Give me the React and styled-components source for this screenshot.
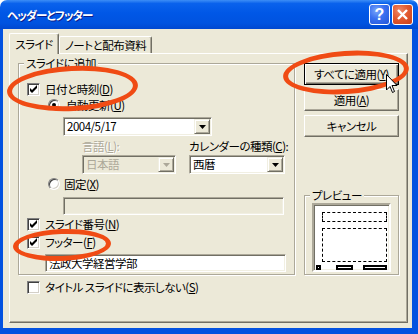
import React from 'react';
import styled, { createGlobalStyle } from 'styled-components';

const GlobalStyle = createGlobalStyle`
  html, body {
    margin: 0;
    padding: 0;
    background: #fff;
  }
`;

const Window = styled.div`
  position: relative;
  width: 418px;
  height: 334px;
  display: flex;
  flex-direction: column;
  overflow: hidden;
  font-family: "Noto Sans CJK JP", "Noto Sans", sans-serif;
  font-size: 11.5px;
  letter-spacing: -0.5px;
  font-feature-settings: "palt";
  color: #000;
`;

const TitleBar = styled.div`
  flex: none;
  height: 29px;
  display: flex;
  align-items: center;
  padding: 0 5px 0 7px;
  border-radius: 7px 7px 0 0;
  background: linear-gradient(
    to bottom,
    #3d8ef6 0%,
    #0a62ec 12%,
    #0057e6 45%,
    #0053e0 80%,
    #0048d0 100%
  );
`;

const Title = styled.div`
  flex: 1;
  color: #fff;
  font-weight: bold;
  font-size: 11.5px;
  letter-spacing: -1px;
  text-shadow: 1px 1px 0 #0a1f8a;
`;

const CaptionButtons = styled.div`
  display: flex;
  gap: 2px;
`;

const CaptionButton = styled.div`
  width: 21px;
  height: 21px;
  box-sizing: border-box;
  border: 1px solid #fff;
  border-radius: 3px;
  display: flex;
  align-items: center;
  justify-content: center;
  color: #fff;
  font-family: "Liberation Sans", Arial, sans-serif;
  font-weight: bold;
  font-size: 16px;
  letter-spacing: 0;
  background: ${(p) =>
    p.$close
      ? 'radial-gradient(circle at 35% 30%, #f08a6a 0%, #e35a30 45%, #c8401c 100%)'
      : 'radial-gradient(circle at 35% 30%, #7aa6fa 0%, #3a70f0 45%, #2456d8 100%)'};
`;

const Frame = styled.div`
  flex: 1;
  display: flex;
  flex-direction: column;
  background: #ece9d8;
  border-style: solid;
  border-color: #0352e0;
  border-width: 0 6px 6px 3px;
  padding: 4px 4px 5px 6px;
`;

const TabStrip = styled.div`
  flex: none;
  height: 20px;
  display: flex;
  align-items: flex-end;
`;

const Tab = styled.div`
  position: relative;
  z-index: ${(p) => (p.$active ? 2 : 1)};
  box-sizing: border-box;
  width: ${(p) => p.$width}px;
  height: ${(p) => (p.$active ? 21 : 17)}px;
  margin-bottom: ${(p) => (p.$active ? -1 : 0)}px;
  display: flex;
  align-items: center;
  justify-content: center;
  background: #ece9d8;
  border: 1px solid;
  border-color: #fff #716f64 transparent #fff;
  border-bottom: none;
  border-radius: 2px 2px 0 0;
  box-shadow: inset -1px 0 0 #aca899;
  line-height: 14px;
`;

const Panel = styled.div`
  flex: 1;
  display: flex;
  flex-direction: column;
  border: 1px solid;
  border-color: #fff #716f64 #716f64 #fff;
  box-shadow: inset -1px -1px 0 #aca899;
  padding: 2px 8px 0 8px;
`;

const TopRow = styled.div`
  display: flex;
  gap: 9px;
`;

const Group = styled.fieldset`
  margin: 0;
  padding: 0;
  min-width: 0;
  width: ${(p) => p.$width}px;
  box-sizing: border-box;
  border: 1px solid #aca899;
  box-shadow: inset 1px 1px 0 #fff, 1px 1px 0 #fff;
  ${(p) => p.$grow && 'margin-top: auto;'}
`;

const Legend = styled.legend`
  margin-left: ${(p) => p.$offset}px;
  padding: 0 2px;
  line-height: 14px;
  background: #ece9d8;
`;

const GroupBody = styled.div`
  display: flex;
  flex-direction: column;
  padding: 0 0 2px 8px;
`;

const Row = styled.div`
  display: flex;
  align-items: center;
  height: 16px;
  margin-top: ${(p) => p.$top || 0}px;
  margin-left: ${(p) => p.$indent || 0}px;
`;

const Label = styled.span`
  margin-left: ${(p) => p.$gap || 0}px;
  line-height: 14px;
  white-space: nowrap;
  color: ${(p) => (p.$disabled ? '#aca899' : '#000')};
  text-shadow: ${(p) => (p.$disabled ? '1px 1px 0 #fff' : 'none')};
  u {
    text-decoration: underline;
    text-underline-offset: 1px;
  }
`;

const CheckBox = styled.div`
  flex: none;
  width: 13px;
  height: 13px;
  box-sizing: border-box;
  border: 1px solid;
  border-color: #808080 #fff #fff #808080;
  box-shadow: inset 1px 1px 0 #404040, inset -1px -1px 0 #d4d0c8;
  background: #fff;
  display: flex;
  align-items: center;
  justify-content: center;
`;

const RadioDot = styled.div`
  flex: none;
  width: 12px;
  height: 12px;
  box-sizing: border-box;
  border-radius: 50%;
  border: 1px solid;
  border-color: #808080 #fff #fff #808080;
  box-shadow: inset 1px 1px 0 #404040, inset -1px -1px 0 #d4d0c8;
  background: #fff;
  display: flex;
  align-items: center;
  justify-content: center;
  &::after {
    content: '';
    width: 4px;
    height: 4px;
    border-radius: 50%;
    background: ${(p) => (p.$checked ? '#000' : 'transparent')};
  }
`;

const Sunken = styled.div`
  box-sizing: border-box;
  display: flex;
  align-items: center;
  width: ${(p) => p.$width}px;
  height: ${(p) => p.$height || 19}px;
  margin-top: ${(p) => p.$top || 0}px;
  margin-left: ${(p) => p.$indent || 0}px;
  border: 1px solid;
  border-color: #aca899 #fff #fff #aca899;
  box-shadow: inset 1px 1px 0 #716f64, inset -1px -1px 0 #f1efe2;
  background: ${(p) => (p.$disabled ? '#ece9d8' : '#fff')};
  padding: 1px;
`;

const FieldText = styled.span`
  flex: 1;
  padding-left: 2px;
  line-height: 15px;
  white-space: nowrap;
  color: ${(p) => (p.$disabled ? '#aca899' : '#000')};
`;

const DropButton = styled.div`
  flex: none;
  width: 16px;
  height: 100%;
  box-sizing: border-box;
  border: 1px solid;
  border-color: #f1efe2 #716f64 #716f64 #f1efe2;
  box-shadow: inset 1px 1px 0 #fff, inset -1px -1px 0 #aca899;
  background: #ece9d8;
  display: flex;
  align-items: center;
  justify-content: center;
`;

const Columns = styled.div`
  display: flex;
  gap: 13px;
  margin-top: 3px;
  margin-left: 55px;
`;

const Column = styled.div`
  display: flex;
  flex-direction: column;
`;

const SideColumn = styled.div`
  flex: 1;
  display: flex;
  flex-direction: column;
  padding-top: 7px;
`;

const Button = styled.div`
  box-sizing: border-box;
  height: 22px;
  margin-bottom: 4px;
  display: flex;
  align-items: center;
  justify-content: center;
  background: #ece9d8;
  border: 1px solid;
  border-color: ${(p) => (p.$default ? '#000' : '#fff #716f64 #716f64 #fff')};
  box-shadow: ${(p) =>
    p.$default
      ? 'inset 1px 1px 0 #fff, inset -1px -1px 0 #716f64, inset -2px -2px 0 #aca899'
      : 'inset -1px -1px 0 #aca899'};
  line-height: 14px;
  white-space: nowrap;
`;

const PreviewBody = styled.div`
  padding: 1px 0 2px 7px;
`;

const PreviewScreen = styled.div`
  box-sizing: border-box;
  width: 79px;
  height: 69px;
  border: 2px solid;
  border-color: #aca899 #fff #fff #aca899;
  box-shadow: inset 1px 1px 0 #716f64, inset -1px -1px 0 #f1efe2;
  background: #fff;
  padding: 7px 2px 0 2px;
  display: flex;
  flex-direction: column;
`;

const DashedBox = styled.div`
  box-sizing: border-box;
  height: ${(p) => p.$height}px;
  margin: ${(p) => p.$top}px 0 0 6px;
  border: 1px dashed #000;
`;

const PreviewFooter = styled.div`
  display: flex;
  align-items: center;
  margin-top: 3px;
`;

const FooterMark = styled.div`
  box-sizing: border-box;
  width: ${(p) => p.$width}px;
  height: 5px;
  margin-left: ${(p) => p.$gap || 0}px;
  border: 2px solid #000;
  background: #fff;
`;

const Ellipse = styled.div`
  position: absolute;
  z-index: 5;
  left: ${(p) => p.$x}px;
  top: ${(p) => p.$y}px;
  width: ${(p) => p.$w}px;
  height: ${(p) => p.$h}px;
  box-sizing: border-box;
  border: 5px solid #f04b14;
  border-radius: 50%;
  transform: rotate(${(p) => p.$rot}deg);
  pointer-events: none;
`;

const Cursor = styled.svg`
  position: absolute;
  z-index: 6;
  left: 386px;
  top: 74px;
`;

const Check = () => (
  <CheckBox>
    <svg width="7" height="8" viewBox="0 -1 7 8">
      <polygon points="0,2 2,4 7,-1 7,2 2,7 0,5" fill="#000" />
    </svg>
  </CheckBox>
);

const Arrow = ({ disabled }) => (
  <svg width="7" height="4" viewBox="0 0 7 4">
    <polygon points="0,0 7,0 3.5,4" fill={disabled ? '#aca899' : '#000'} />
  </svg>
);

const Combo = ({ value, disabled, ...rest }) => (
  <Sunken $disabled={disabled} {...rest}>
    <FieldText $disabled={disabled}>{value}</FieldText>
    <DropButton>
      <Arrow disabled={disabled} />
    </DropButton>
  </Sunken>
);

export default function App() {
  return (
    <Window>
      <GlobalStyle />
      <TitleBar>
        <Title>ヘッダーとフッター</Title>
        <CaptionButtons>
          <CaptionButton>?</CaptionButton>
          <CaptionButton $close>
            <svg width="11" height="11" viewBox="0 0 11 11">
              <path d="M1 1L10 10M10 1L1 10" stroke="#fff" strokeWidth="2.4" />
            </svg>
          </CaptionButton>
        </CaptionButtons>
      </TitleBar>

      <Frame>
        <TabStrip>
          <Tab $active $width={50}>スライド</Tab>
          <Tab $width={93}>ノートと配布資料</Tab>
        </TabStrip>

        <Panel>
          <TopRow>
            <Group $width={277}>
              <Legend $offset={5}>スライドに追加</Legend>
              <GroupBody>
                <Row $top={11}>
                  <Check />
                  <Label $gap={5}>日付と時刻(<u>D</u>)</Label>
                </Row>
                <Row $indent={21}>
                  <RadioDot $checked />
                  <Label $gap={6}>自動更新(<u>U</u>)</Label>
                </Row>
                <Combo value="2004/5/17" $width={149} $top={4} $indent={36} />
                <Columns>
                  <Column>
                    <Label $disabled>言語(<u>L</u>):</Label>
                    <Combo value="日本語" disabled $width={94} $top={2} />
                  </Column>
                  <Column>
                    <Label>カレンダーの種類(<u>C</u>):</Label>
                    <Combo value="西暦" $width={96} $top={2} />
                  </Column>
                </Columns>
                <Row $top={2} $indent={21}>
                  <RadioDot />
                  <Label $gap={4}>固定(<u>X</u>)</Label>
                </Row>
                <Sunken $disabled $width={221} $height={18} $top={5} $indent={36} />
                <Row $top={1}>
                  <Check />
                  <Label $gap={5}>スライド番号(<u>N</u>)</Label>
                </Row>
                <Row $top={2}>
                  <Check />
                  <Label $gap={5}>フッター(<u>F</u>)</Label>
                </Row>
                <Sunken $width={241} $height={18} $top={4} $indent={18}>
                  <FieldText>法政大学経営学部</FieldText>
                </Sunken>
              </GroupBody>
            </Group>

            <SideColumn>
              <Button $default>すべてに適用(<u>Y</u>)</Button>
              <Button>適用(<u>A</u>)</Button>
              <Button>キャンセル</Button>
              <Group $grow>
                <Legend $offset={5}>プレビュー</Legend>
                <PreviewBody>
                  <PreviewScreen>
                    <DashedBox $height={10} $top={0} />
                    <DashedBox $height={34} $top={6} />
                    <PreviewFooter>
                      <FooterMark $width={5} />
                      <FooterMark $width={18} $gap={15} />
                      <FooterMark $width={25} $gap={10} />
                    </PreviewFooter>
                  </PreviewScreen>
                </PreviewBody>
              </Group>
            </SideColumn>
          </TopRow>

          <Row $top={4} $indent={9}>
            <CheckBox />
            <Label $gap={5}>タイトル スライドに表示しない(<u>S</u>)</Label>
          </Row>
        </Panel>
      </Frame>

      <Ellipse $x={7} $y={66} $w={131} $h={45} $rot={-3} />
      <Ellipse $x={283} $y={51} $w={126} $h={43} $rot={-4} />
      <Ellipse $x={13} $y={229} $w={98} $h={32} $rot={-2} />

      <Cursor width="12" height="20" viewBox="0 0 12 20">
        <polygon
          points="0.5,0.5 0.5,16 4,12.5 6.5,18.5 8.5,17.5 6,11.5 11,11.5"
          fill="#fff"
          stroke="#000"
          strokeWidth="1"
        />
      </Cursor>
    </Window>
  );
}
